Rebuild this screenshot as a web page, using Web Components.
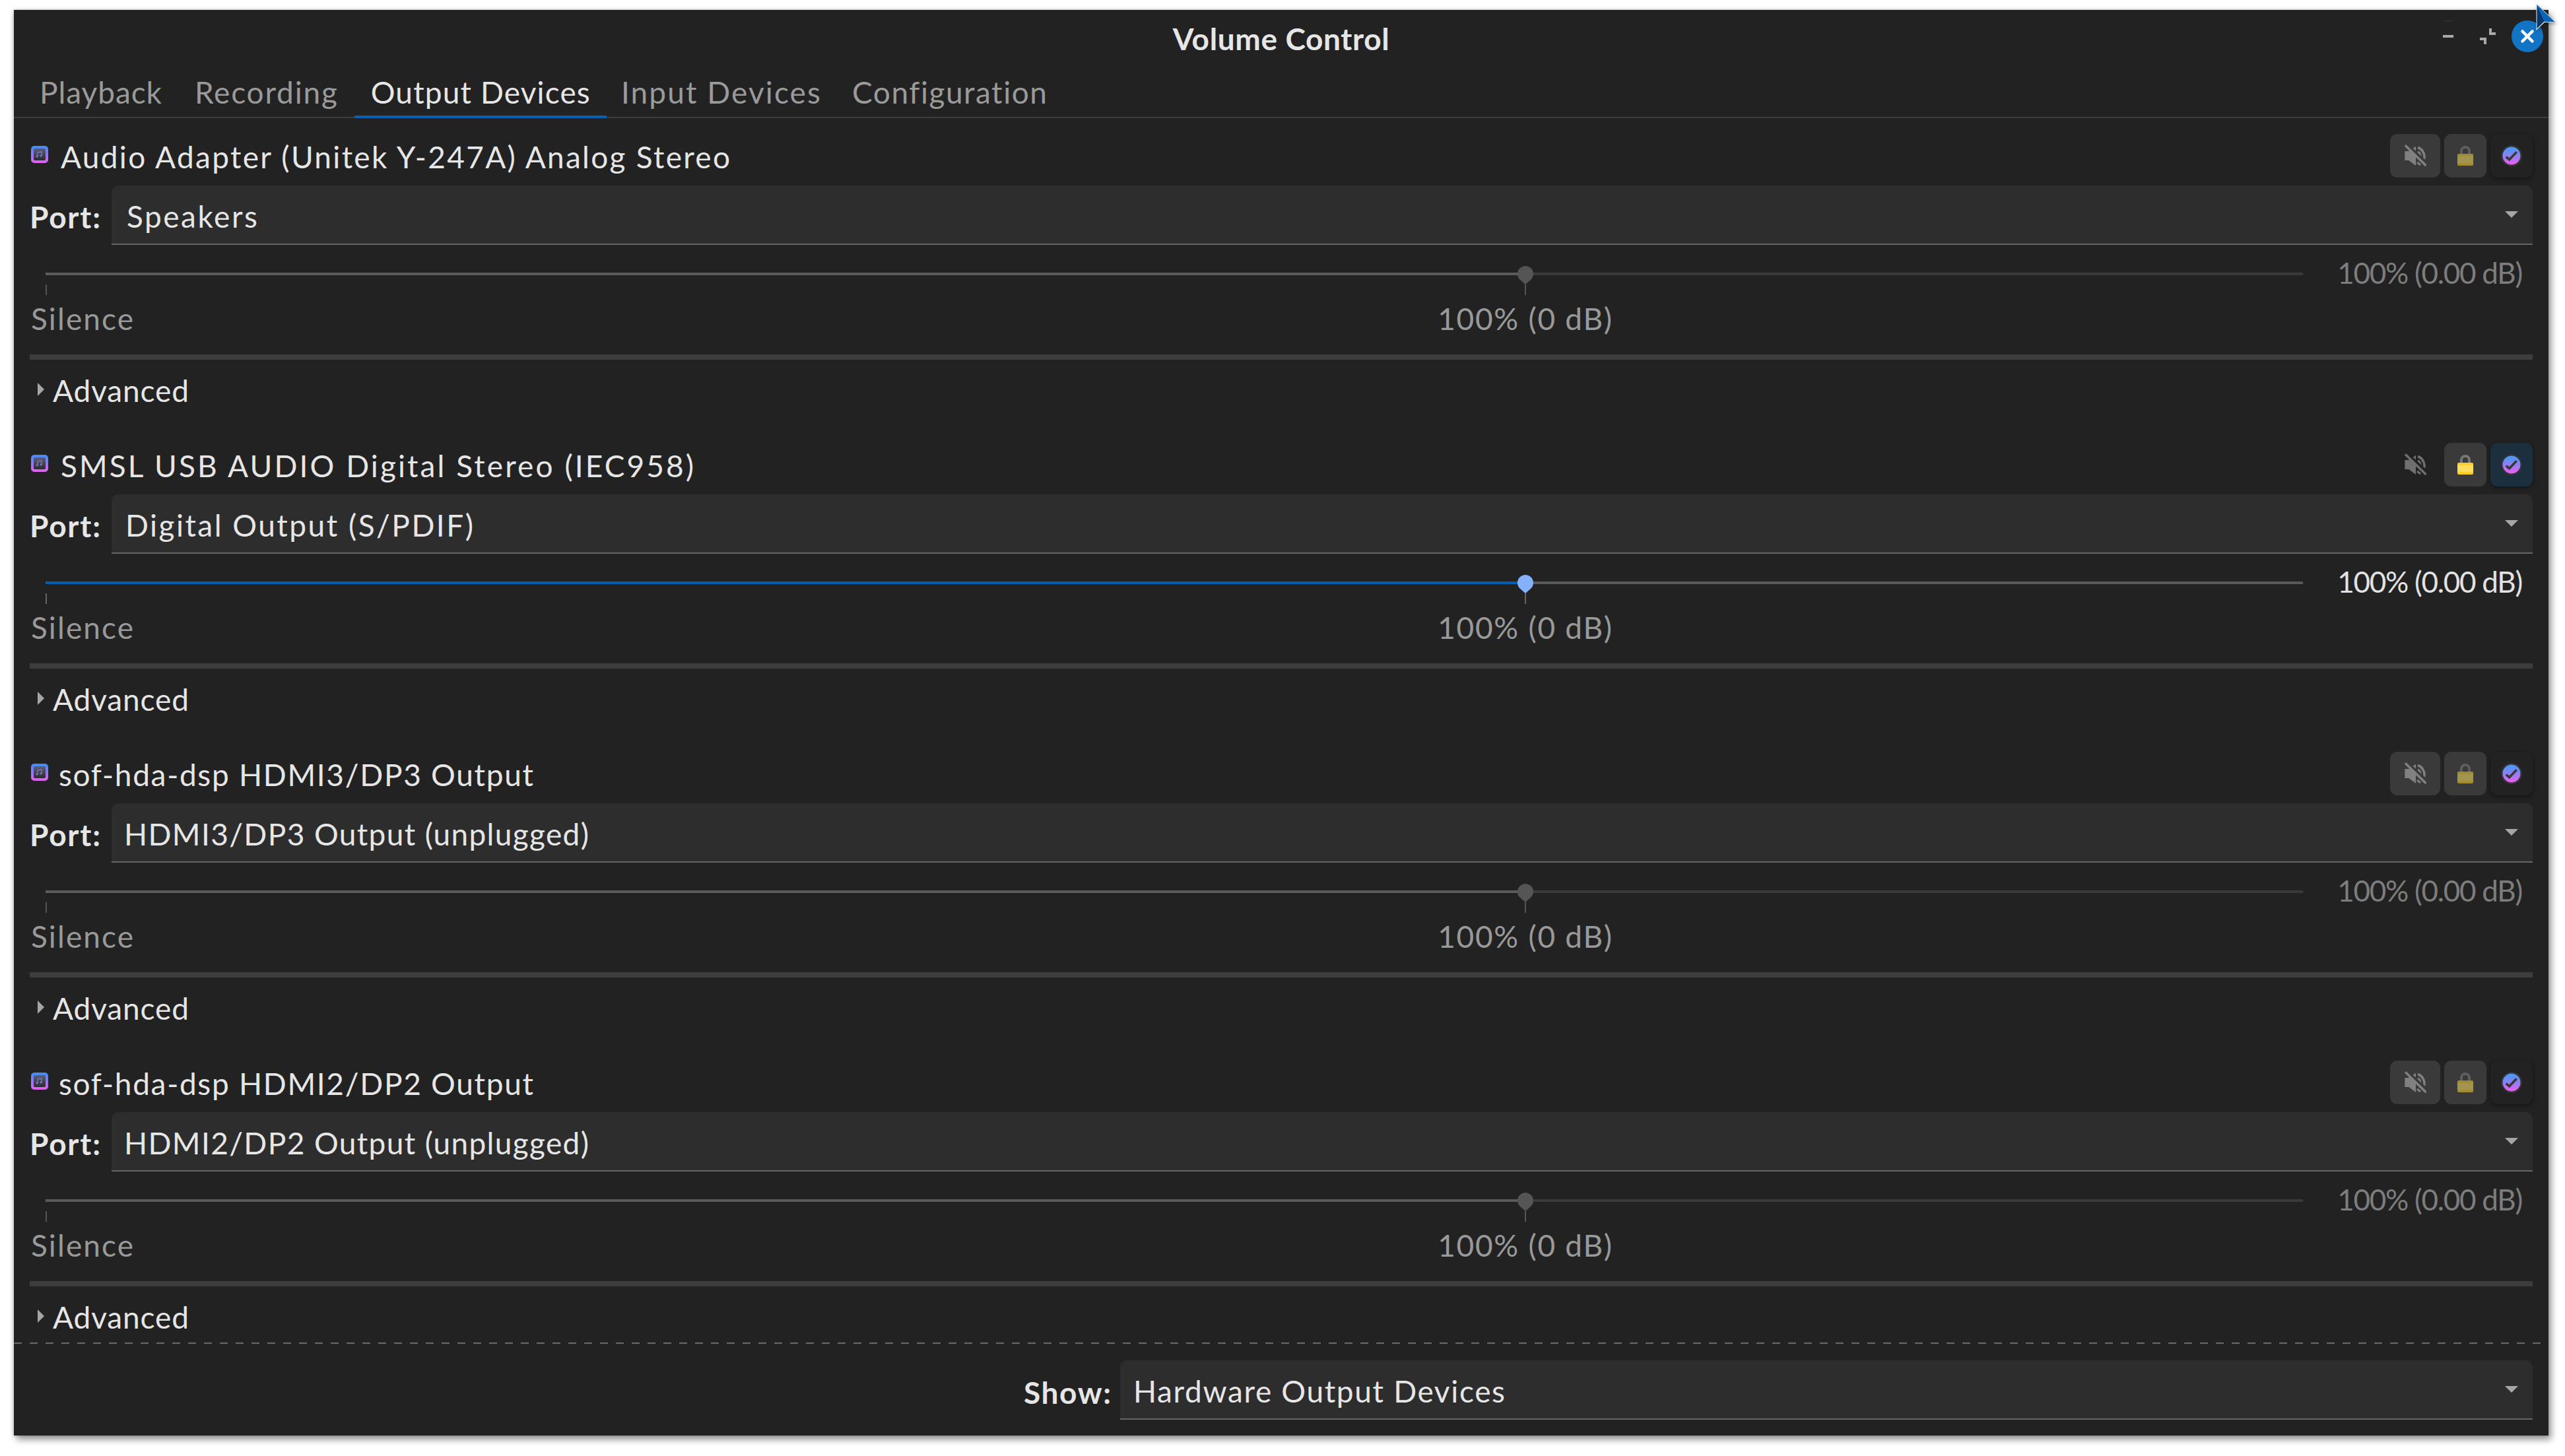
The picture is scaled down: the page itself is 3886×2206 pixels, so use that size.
<!DOCTYPE html>
<html>
<head>
<meta charset="utf-8">
<title>Volume Control</title>
<style>
  html, body { margin: 0; background: #fff; }
  body { width: 3886px; height: 2206px; padding: 15px 25px 31px 21px; box-sizing: border-box; font-family: Lato, "Noto Sans", sans-serif; font-size: 46px; color: #e2e2e2; overflow: hidden; }
</style>
</head>
<body>
<vc-window>
  <vc-headerbar slot="header">Volume Control</vc-headerbar>
  <vc-tabs slot="header"></vc-tabs>
  <vc-device name="Audio Adapter (Unitek Y-247A) Analog Stereo" name-w="1014" port="Speakers" port-x="23" port-w="198"></vc-device>
  <vc-device active name="SMSL USB AUDIO Digital Stereo (IEC958)" name-w="959" port="Digital Output (S/PDIF)" port-x="21" port-w="527"></vc-device>
  <vc-device name="sof-hda-dsp HDMI3/DP3 Output" name-w="719" name-x="89" port="HDMI3/DP3 Output (unplugged)" port-x="19" port-w="704"></vc-device>
  <vc-device name="sof-hda-dsp HDMI2/DP2 Output" name-w="719" name-x="89" port="HDMI2/DP2 Output (unplugged)" port-x="19" port-w="704"></vc-device>
  <vc-footer slot="footer"></vc-footer>
</vc-window>
<vc-cursor></vc-cursor>

<script>
// text that gets spread out to the width it has in the reference
class VcText extends HTMLElement {
  constructor() {
    super();
    this.attachShadow({ mode: 'open' });
    this.shadowRoot.innerHTML = `<style>:host{display:inline-block;white-space:nowrap}</style><slot></slot>`;
  }
  connectedCallback() {
    const want = parseFloat(this.getAttribute('w'));
    if (!want) return;
    const nodes = this.shadowRoot.querySelector('slot').assignedNodes({ flatten: true });
    const n = nodes.map(x => x.textContent).join('').trim().length;
    if (n < 2) return;
    this.style.letterSpacing = '0px';
    const have = this.getBoundingClientRect().width;
    if (have > 0) this.style.letterSpacing = ((want - have) / (n - 1)) + 'px';
  }
}
customElements.define('vc-text', VcText);

class VcWindow extends HTMLElement {
  constructor() {
    super();
    this.attachShadow({ mode: 'open' });
    this.shadowRoot.innerHTML = `
      <style>
        :host { display: flex; flex-direction: column; width: 3840px; height: 2160px; background: #222222; box-shadow: 4px 6px 10px rgba(0,0,0,.42), -1px 0 5px rgba(0,0,0,.18); }
        .devices { flex: 1; min-height: 0; overflow: hidden; }
      </style>
      <slot name="header"></slot>
      <div class="devices"><slot></slot></div>
      <slot name="footer"></slot>`;
  }
}
customElements.define('vc-window', VcWindow);

class VcHeaderbar extends HTMLElement {
  constructor() {
    super();
    this.attachShadow({ mode: 'open' });
    this.shadowRoot.innerHTML = `
      <style>
        :host { display: grid; grid-template-columns: 1fr auto 1fr; align-items: center; height: 88px; }
        .title { grid-column: 2; font-weight: 700; color: #e6e6e6; transform: translateY(-1px); }
        .ctl { grid-column: 3; justify-self: end; align-self: start; display: flex; align-items: flex-start; padding-right: 8px; }
        svg { display: block; }
      </style>
      <div class="title"><vc-text w="328"><slot></slot></vc-text></div>
      <div class="ctl">
        <svg style="margin-top:16px" width="16" height="26" viewBox="0 0 16 26"><rect x="2" width="13" height="1" y="0" fill="#3a3a3a"/><rect y="22" width="16" height="4" fill="#a9a9a9"/></svg>
        <svg style="margin:28px 0 0 40px" width="24" height="24" viewBox="0 0 24 24" fill="none" stroke="#a9a9a9" stroke-width="4"><path d="M16 0V8H24M0 16H8V24"/></svg>
        <svg style="margin:16px 0 0 24px" width="48" height="48" viewBox="0 0 48 48"><circle cx="24" cy="24" r="24" fill="#1274c4"/><path d="M16.500 16.500L31.500 31.500M31.500 16.500L16.500 31.500" stroke="#fff" stroke-width="4.500" stroke-linecap="round"/></svg>
      </div>`;
  }
}
customElements.define('vc-headerbar', VcHeaderbar);

class VcTabs extends HTMLElement {
  constructor() {
    super();
    this.attachShadow({ mode: 'open' });
    this.shadowRoot.innerHTML = `
      <style>
        :host { display: flex; height: 76px; box-sizing: border-box; border-bottom: 2px solid #3d3d3d; padding-left: 20px; color: #9a9a9a; }
        .tab { box-sizing: border-box; height: 76px; line-height: 74px; }
        .on { color: #e6e6e6; border-bottom: 4px solid #0860b4; padding: 0 24px 0 25px; }
      </style>
      <div class="tab" style="padding-left:19px;margin-right:49px"><vc-text w="185">Playback</vc-text></div>
      <div class="tab" style="margin-right:24px"><vc-text w="216">Recording</vc-text></div>
      <div class="tab on" style="margin-right:22px"><vc-text w="332">Output Devices</vc-text></div>
      <div class="tab" style="margin-right:46px"><vc-text w="302">Input Devices</vc-text></div>
      <div class="tab"><vc-text w="295">Configuration</vc-text></div>`;
  }
}
customElements.define('vc-tabs', VcTabs);

class VcCombo extends HTMLElement {
  constructor() {
    super();
    this.attachShadow({ mode: 'open' });
    this.shadowRoot.innerHTML = `
      <style>
        :host { display: flex; align-items: center; flex: 1; height: 90px; box-sizing: border-box; background: #2d2d2d; border-bottom: 2px solid #666; border-radius: 10px 10px 0 0; color: #e6e6e6; }
        .v { flex: 1; line-height: 88px; transform: translateY(3px); }
        svg { margin-right: 22px; display: block; }
      </style>
      <div class="v"><slot></slot></div>
      <svg width="20" height="10" viewBox="0 0 20 10"><path d="M0 0H20L10 10Z" fill="#a6a6a6"/></svg>`;
  }
}
customElements.define('vc-combo', VcCombo);

class VcDevice extends HTMLElement {
  constructor() {
    super();
    this.attachShadow({ mode: 'open' });
  }
  connectedCallback() {
    const active = this.hasAttribute('active');
    const a = (k, d) => this.getAttribute(k) || d;
    const uid = 'g' + Math.random().toString(36).slice(2, 8);
    this.shadowRoot.innerHTML = `
      <style>
        :host { display: block; box-sizing: border-box; height: 468px; padding: 24px 24px 0; }
        .head { display: flex; align-items: flex-start; height: 66px; margin-bottom: 12px; }
        .dev { display: block; margin: 18px 0 0 2px; }
        .name { margin-left: ${a('name-x', '92') - 73}px; line-height: 66px; color: #e6e6e6; transform: translateY(2px); }
        .btns { margin-left: auto; display: flex; gap: 6px; }
        .btn { height: 66px; width: 64px; border-radius: 11px; background: #3a3a3a; display: flex; align-items: center; justify-content: center; color: #808080; --lock-a: #9f8c30; --lock-b: #a3954f; --shackle: #5e5e5e; --cut: #3a3a3a; }
        .mute { width: 76px; }
        .flat { background: none; color: #6f6f6f; --cut: #222; }
        .sel { background: #222; box-shadow: 0 2px 6px rgba(0,0,0,.45); }
        .lock-on { --lock-a: #fccb1f; --lock-b: #fddc5e; --shackle: #777; }
        .sel-on { background: #1c2f3f; box-shadow: 0 2px 6px rgba(0,0,0,.45); }
        .port { display: flex; align-items: center; height: 90px; }
        .plabel { width: 124px; font-weight: 700; color: #e6e6e6; transform: translateY(2px); }
        .pval { margin-left: ${a('port-x', '23')}px; }
        .slider { height: 166px; display: block; position: relative; }
        .top { display: flex; height: 60px; }
        .track { position: relative; margin: 42px 0 0 24px; width: 3420px; height: 4px; background: ${active ? '#5a5a5a' : '#3a3a3a'}; }
        .fill { width: 65.560%; height: 100%; background: ${active ? '#0060b4' : '#5b5b5b'}; }
        .knob { position: absolute; left: 2230px; top: -10px; display: block; }
        .val { margin-left: auto; padding-right: 16px; font-size: 44px; line-height: 85px; color: ${active ? '#e2e2e2' : '#7d7d7d'}; }
        .ticks { display: grid; grid-template-columns: 2266px 0; color: #999; height: 100px; }
        .silence { padding-left: 2px; }
        .t { width: 2px; height: 16px; background: ${active ? '#666' : '#555'}; }
        .col { display: flex; flex-direction: column; }
        .mid { align-items: center; white-space: nowrap; }
        .lab { line-height: 72px; }
        .sep { height: 8px; background: #3d3d3d; }
        .adv { display: flex; align-items: center; height: 92px; color: #e6e6e6; }
        .adv svg { margin: 0 13px 0 12px; display: block; transform: translateY(-1px); }
      </style>
      <div class="head">
        <svg class="dev" width="26" height="26" viewBox="0 0 26 26">
          <defs><linearGradient id="${uid}a" x1="0" y1="0" x2="0" y2="1"><stop offset="0" stop-color="#3a8ff6"/><stop offset="1" stop-color="#ea5ff0"/></linearGradient>
          <linearGradient id="${uid}b" x1="0" y1="0" x2="0" y2="1"><stop offset="0" stop-color="#5d5f78"/><stop offset="1" stop-color="#2c2a33"/></linearGradient></defs>
          <rect width="26" height="26" rx="5" fill="url(#${uid}a)"/>
          <rect x="4" y="4" width="18" height="18" rx="2" fill="url(#${uid}b)"/>
          <path d="M10 16V10L16 9V15" fill="none" stroke="#7f79c0" stroke-width="1.300"/><circle cx="9" cy="16" r="1.500" fill="#7f79c0"/><circle cx="15" cy="15" r="1.500" fill="#7f79c0"/>
        </svg>
        <div class="name"><vc-text w="${a('name-w')}">${a('name')}</vc-text></div>
        <div class="btns">
          <div class="btn mute ${active ? 'flat' : ''}">
            <svg width="34" height="34" viewBox="0 0 34 34" fill="none">
              <path d="M1.300 10H7.300L18 2.700V32L7.300 24H1.300Z" fill="currentColor"/>
              <path d="M21 4.500A15 15 0 0 1 29 26M21 11A8 8 0 0 1 24.500 20" stroke="currentColor" stroke-width="3.500"/>
              <path d="M20 27L25 31" stroke="currentColor" stroke-width="3"/>
              <path d="M4.500 0L36 29" stroke="var(--cut)" stroke-width="4"/>
              <path d="M2 1.300L33.500 32" stroke="currentColor" stroke-width="3.600"/>
            </svg>
          </div>
          <div class="btn ${active ? 'lock-on' : ''}">
            <svg width="24" height="30" viewBox="0 0 24 30">
              <path d="M6 13V8A6 6 0 0 1 18 8V13" fill="none" stroke="var(--shackle)" stroke-width="4"/>
              <rect y="12" width="24" height="18" rx="2" fill="var(--lock-a)"/>
              <rect y="15.500" width="24" height="11" fill="var(--lock-b)"/>
            </svg>
          </div>
          <div class="btn ${active ? 'sel-on' : 'sel'}">
            <svg width="32" height="32" viewBox="0 0 32 32">
              <defs><linearGradient id="${uid}c" x1="0" y1="0" x2="0" y2="1"><stop offset="0" stop-color="#3f9cf8"/><stop offset=".5" stop-color="#8d80f4"/><stop offset="1" stop-color="#f05df0"/></linearGradient></defs>
              <circle cx="16" cy="16" r="16" fill="#343438"/>
              <circle cx="16" cy="16" r="13.500" fill="url(#${uid}c)"/>
              <path d="M7.700 17.700L12.700 21.700L23.700 10.300" fill="none" stroke="#38383c" stroke-width="3.600"/>
            </svg>
          </div>
        </div>
      </div>
      <div class="port">
        <div class="plabel"><vc-text w="107">Port:</vc-text></div>
        <vc-combo><span class="pval"><vc-text w="${a('port-w')}">${a('port')}</vc-text></span></vc-combo>
      </div>
      <div class="slider">
        <div class="top">
          <div class="track">
            <div class="fill"></div>
            <svg class="knob" width="24" height="28" viewBox="0 0 24 28"><path d="M12 28L3.500 20.500A12 12 0 1 1 20.500 20.500Z" fill="${active ? '#84b2fa' : '#555'}"/></svg>
          </div>
          <div class="val"><vc-text w="281">100% (0.00 dB)</vc-text></div>
        </div>
        <div class="ticks">
          <div class="col"><div class="t" style="margin-left:24px"></div><div class="lab silence"><vc-text w="155">Silence</vc-text></div></div>
          <div class="col mid"><div class="t"></div><div class="lab"><vc-text w="264">100% (0 dB)</vc-text></div></div>
        </div>
      </div>
      <div class="sep"></div>
      <div class="adv">
        <svg width="10" height="20" viewBox="0 0 10 20"><path d="M0 0L10 10L0 20Z" fill="#a6a6a6"/></svg>
        <vc-text w="206">Advanced</vc-text>
      </div>`;
  }
}
customElements.define('vc-device', VcDevice);

class VcFooter extends HTMLElement {
  constructor() {
    super();
    this.attachShadow({ mode: 'open' });
    this.shadowRoot.innerHTML = `
      <style>
        :host { display: block; height: 141px; box-sizing: border-box; }
        .dash { height: 2px; background: repeating-linear-gradient(90deg, #6a6a6a 0 12px, transparent 12px 24px); margin-right: 12px; }
        .row { display: flex; align-items: center; margin-top: 25px; padding: 0 24px 0 1530px; height: 90px; }
        .lab { width: 146px; font-weight: 700; color: #e6e6e6; transform: translateY(3px); }
        .v { margin-left: 20px; }
      </style>
      <div class="dash"></div>
      <div class="row">
        <div class="lab"><vc-text w="132">Show:</vc-text></div>
        <vc-combo><span class="v"><vc-text w="563">Hardware Output Devices</vc-text></span></vc-combo>
      </div>`;
  }
}
customElements.define('vc-footer', VcFooter);

class VcCursor extends HTMLElement {
  constructor() {
    super();
    this.attachShadow({ mode: 'open' });
    this.shadowRoot.innerHTML = `
      <style>:host { position: absolute; left: 3838px; top: 0; width: 48px; height: 52px; display: block; } svg { display: block; filter: drop-shadow(1px 2px 2px rgba(0,0,0,.3)); }</style>
      <svg width="48" height="52" viewBox="0 0 48 52">
        <path d="M4.500 5L35 34.500L17 34L4.500 46Z" fill="#e8eef5"/>
        <path d="M5.500 7L17 32L5.500 43.500Z" fill="#06386e"/>
        <path d="M5.500 7L33 33.500L17 33Z" fill="#0a64b8"/>
      </svg>`;
  }
}
customElements.define('vc-cursor', VcCursor);
</script>
</body>
</html>
